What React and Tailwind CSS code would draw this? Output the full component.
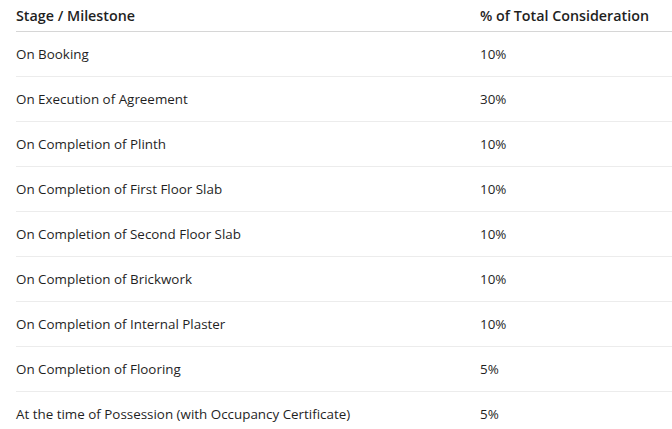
const rows = [
  ["On Booking", "10%"],
  ["On Execution of Agreement", "30%"],
  ["On Completion of Plinth", "10%"],
  ["On Completion of First Floor Slab", "10%"],
  ["On Completion of Second Floor Slab", "10%"],
  ["On Completion of Brickwork", "10%"],
  ["On Completion of Internal Plaster", "10%"],
  ["On Completion of Flooring", "5%"],
  ["At the time of Possession (with Occupancy Certificate)", "5%"],
];

export default function App() {
  return (
    <div className="bg-white pl-4 text-[13.4px] text-[#1f1f1f] font-['Open_Sans',sans-serif]">
      <table className="w-[656px] border-collapse">
        <thead>
          <tr className="border-b border-[#d6d6d6]">
            <th className="w-[464px] h-[31px] text-left text-[14.3px] font-semibold">Stage / Milestone</th>
            <th className="h-[31px] text-left text-[14.3px] font-semibold">% of Total Consideration</th>
          </tr>
        </thead>
        <tbody>
          {rows.map(([stage, pct]) => (
            <tr key={stage} className="border-b border-[#ececec]">
              <td className="h-[45px] pt-[2px]">{stage}</td>
              <td className="h-[45px] pt-[2px]">{pct}</td>
            </tr>
          ))}
        </tbody>
      </table>
    </div>
  );
}
